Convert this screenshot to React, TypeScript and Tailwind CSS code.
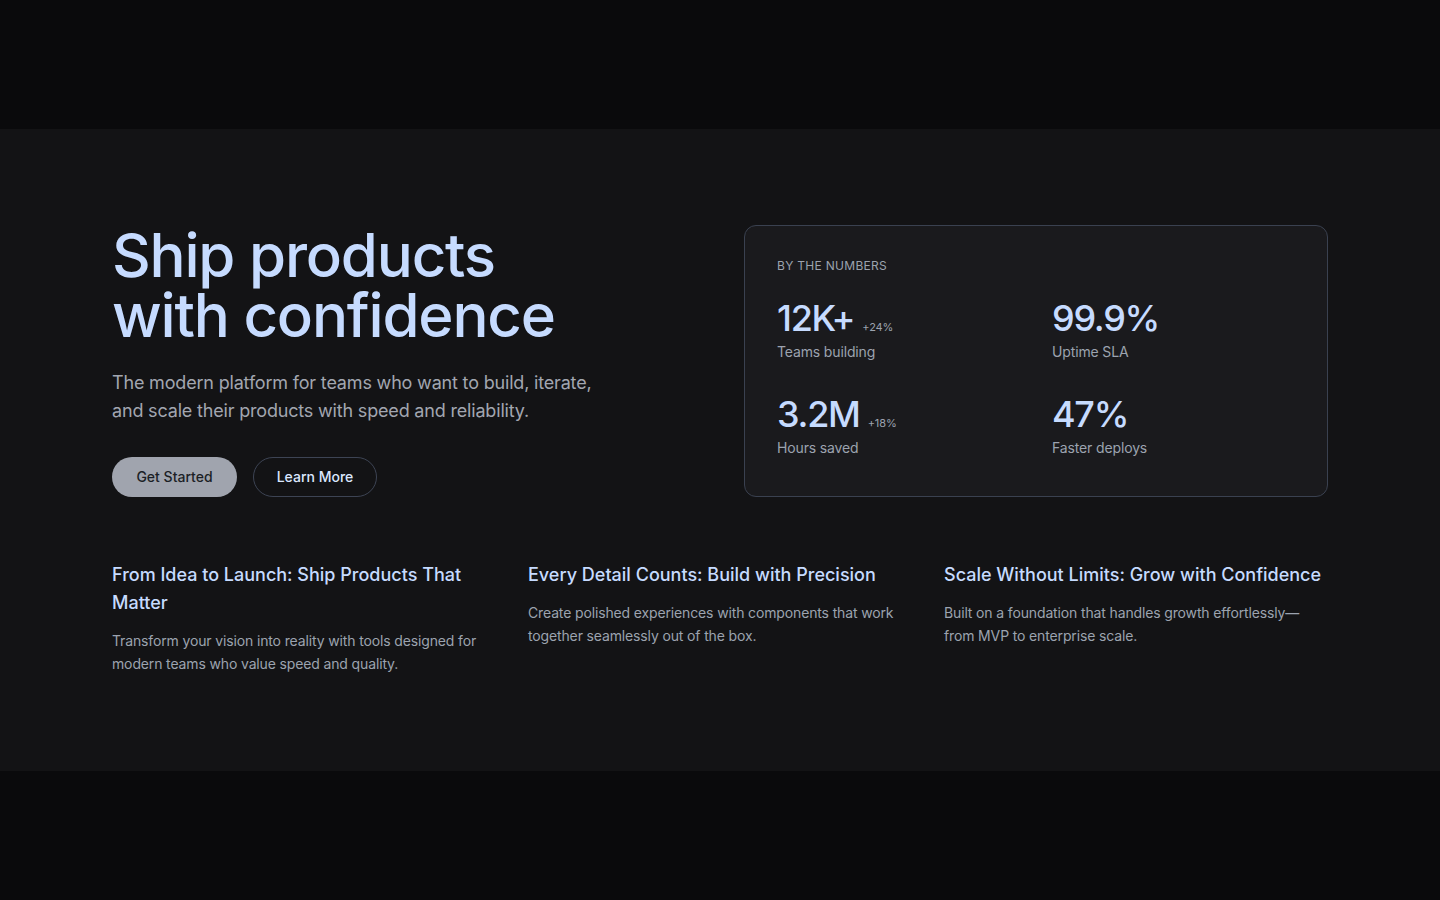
export default function App() {
  const stats = [
    { value: "12K+", delta: "+24%", label: "Teams building" },
    { value: "99.9%", delta: "", label: "Uptime SLA" },
    { value: "3.2M", delta: "+18%", label: "Hours saved" },
    { value: "47%", delta: "", label: "Faster deploys" },
  ];

  const features = [
    {
      title: "From Idea to Launch: Ship Products That Matter",
      body: "Transform your vision into reality with tools designed for modern teams who value speed and quality.",
    },
    {
      title: "Every Detail Counts: Build with Precision",
      body: "Create polished experiences with components that work together seamlessly out of the box.",
    },
    {
      title: "Scale Without Limits: Grow with Confidence",
      body: "Built on a foundation that handles growth effortlessly—from MVP to enterprise scale.",
    },
  ];

  return (
    <div
      className="min-h-screen flex flex-col justify-center bg-[#0a0a0c]"
      style={{ fontFamily: "Inter, 'Noto Sans', sans-serif" }}
    >
      <section className="bg-[#131315] py-24">
        <div className="max-w-7xl mx-auto px-8">
          {/* hero */}
          <div className="grid grid-cols-2 gap-12">
            <div>
              <h1 className="text-[60px] leading-[60px] font-medium tracking-[-0.02em] text-[#c6dbff]">
                Ship products
                <br />
                with confidence
              </h1>
              <p className="mt-6 max-w-[500px] text-lg leading-7 text-[#a2a6b0] tracking-[-0.01em]">
                The modern platform for teams who want to build, iterate, and scale their products with speed and reliability.
              </p>
              <div className="mt-8 flex gap-4">
                <button className="h-10 w-[125px] rounded-full bg-[#a0a4ae] text-sm font-medium text-[#1c1f26]">
                  Get Started
                </button>
                <button className="h-10 w-[124px] rounded-full border border-[#3d4454] text-sm font-medium text-[#dbe7ff]">
                  Learn More
                </button>
              </div>
            </div>

            <div className="rounded-xl border border-[#3a4150] bg-[#1a1a1d] p-8">
              <div className="text-xs leading-4 uppercase tracking-wide text-[#9ca3af]">By the numbers</div>
              <div className="mt-6 grid grid-cols-2 gap-x-8 gap-y-8">
                {stats.map((s) => (
                  <div key={s.label}>
                    <div className="flex items-baseline">
                      <span className="text-4xl leading-10 font-medium tracking-[-0.035em] text-[#c6dbff]">{s.value}</span>
                      {s.delta && <span className="ml-2 text-[11px] tracking-[-0.01em] text-[#9ca3af]">{s.delta}</span>}
                    </div>
                    <div className="mt-1 text-sm leading-5 tracking-[-0.01em] text-[#9ca3af]">{s.label}</div>
                  </div>
                ))}
              </div>
            </div>
          </div>

          {/* features */}
          <div className="mt-16 grid grid-cols-3 gap-8">
            {features.map((f) => (
              <div key={f.title}>
                <h3 className="text-lg leading-7 font-medium text-[#c6dbff]">{f.title}</h3>
                <p className="mt-3 text-sm leading-[23px] tracking-[-0.01em] text-[#9ca3af]">{f.body}</p>
              </div>
            ))}
          </div>
        </div>
      </section>
    </div>
  );
}
